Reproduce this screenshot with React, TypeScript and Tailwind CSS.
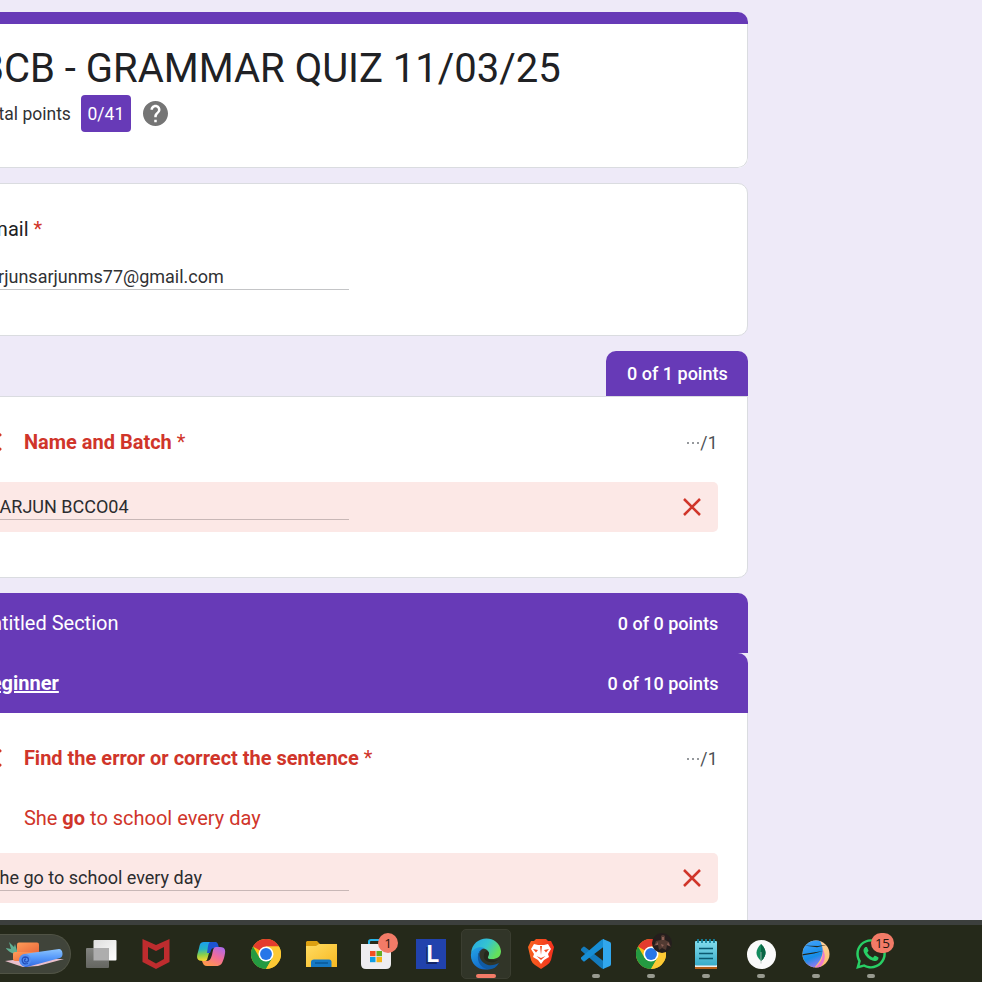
import type { ReactNode } from "react";
import { FaWhatsapp } from "react-icons/fa";

function Cross({ className }: { className: string }) {
  return (
    <svg viewBox="0 0 18 18" className={className} fill="none" stroke="#d0352a" strokeWidth="2.5">
      <path d="M1 1 17 17M17 1 1 17" />
    </svg>
  );
}

function Answer({ children }: { children: string }) {
  return (
    <div className="flex h-[50px] justify-between rounded-[5px] bg-[#fce8e6] pr-[17px] pl-[10.5px]">
      <div className="mt-[7px] h-[31px] w-[360px] border-b border-[#c8b7b6] text-[18px] leading-[36px] whitespace-nowrap text-[#2b2c2f]">
        {children}
      </div>
      <Cross className="mt-[16px] h-[18px] w-[18px]" />
    </div>
  );
}

function QuestionTitle({ children }: { children: string }) {
  return (
    <div className="flex h-[30px] items-center">
      <Cross className="mr-[21.5px] ml-[6px] h-[18px] w-[18px]" />
      <h2 className="grow text-[20px] leading-[30px] font-bold text-[#d0352a]">
        {children} <span className="font-normal">*</span>
      </h2>
      <span className="flex items-center pt-[1px] text-[17.5px] leading-[30px] tracking-[0.3px] text-[#4c4f54]">
        <span className="mr-px flex gap-[3px]">
          <i className="h-[2px] w-[2px] bg-[#96999d]" />
          <i className="h-[2px] w-[2px] bg-[#96999d]" />
          <i className="h-[2px] w-[2px] bg-[#96999d]" />
        </span>
        /1
      </span>
    </div>
  );
}

function SectionBar({ title, points }: { title: ReactNode; points: string }) {
  return (
    <div className="flex h-[60px] items-center justify-between rounded-t-[10px] bg-[#673ab7] px-[30px] text-white">
      <span className="text-[20px]">{title}</span>
      <span className="pt-[1px] text-[18px] font-medium">{points}</span>
    </div>
  );
}

function Chrome() {
  return (
    <svg viewBox="0 0 48 48" className="h-[30px] w-[30px]">
      <circle cx="24" cy="24" r="24" fill="#fbc116" />
      <path d="M24 24 3.2 12A24 24 0 0 1 44.8 12H24Z" fill="#e33b2e" />
      <path d="M3.2 12A24 24 0 0 0 24 48L34.4 30 24 34 13.6 30Z" fill="#249a41" />
      <path d="M24 12H44.8A24 24 0 0 1 24 48L34.4 30Z" fill="#fcc934" />
      <circle cx="24" cy="24" r="12" fill="#fff" />
      <circle cx="24" cy="24" r="9.5" fill="#2676e8" />
    </svg>
  );
}

function YogaPicture() {
  return (
    <svg viewBox="0 0 60 30" className="h-[30px] w-[60px]">
      <defs>
        <linearGradient id="mat" x2="0" y2="1">
          <stop stopColor="#8bc4ff" />
          <stop offset=".5" stopColor="#5598fa" />
          <stop offset="1" stopColor="#3468df" />
        </linearGradient>
        <linearGradient id="block" x2="1" y2="1">
          <stop stopColor="#ff9b58" />
          <stop offset="1" stopColor="#e9673a" />
        </linearGradient>
      </defs>
      <path d="m0 22 16-2 43 0-26 7-15 1Z" fill="#eac0cc" />
      <path d="M10 15C5 14 1 10 1 9l5 1-2-7 5 5 1-3 3 10-3 2Z" fill="#61ae91" />
      <rect x="12" y="3.5" width="22" height="11" rx="2" fill="url(#block)" />
      <rect x="8" y="13" width="26" height="9" rx="2" fill="url(#block)" />
      <path d="M19 15 54 10c4 0 5 8 1 9l-33 9c-9 0-9-11-3-13Z" fill="url(#mat)" />
      <ellipse cx="20" cy="21" rx="6" ry="6" fill="#558ff1" />
      <path d="M23 24.5c-6 2-8-6-3-6.5 5 0 4 5.5 1 5-2 0-2-3 0-3" fill="none" stroke="#2550bb" strokeWidth="1.3" />
    </svg>
  );
}

function TaskView() {
  return (
    <svg viewBox="0 0 32 32" className="h-[32px] w-[32px]">
      <defs>
        <linearGradient id="tv" x2="1" y2="1"><stop stopColor="#dededd" /><stop offset="1" stopColor="#fff" /></linearGradient>
        <linearGradient id="tvBack" x2="0" y2="1"><stop stopColor="#82837f" /><stop offset="1" stopColor="#656661" /></linearGradient>
      </defs>
      <rect x="8.5" y="2" width="23" height="20.5" rx="1" fill="url(#tv)" />
      <rect x="1" y="10" width="23" height="20" rx="1" fill="url(#tvBack)" />
      <path d="M8.5 10H24v12.5H8.5Z" fill="#adadad" />
    </svg>
  );
}

function McAfee() {
  return (
    <svg viewBox="0 0 28 30" className="h-[30px] w-[28px]">
      <path d="m.5 0 13.5 6L27.5 0v23l-13.5 7L.5 23Zm5.500 8v12l8 4.500 8-4.500V8l-8 4Z" fill="#be2c2e" fillRule="evenodd" />
    </svg>
  );
}

function Copilot() {
  return (
    <svg viewBox="0 0 30 28" className="h-[28px] w-[30px]">
      <defs>
        <linearGradient id="cpA" x2=".1" y2="1"><stop stopColor="#1b9cf2" /><stop offset=".4" stopColor="#25b4c3" /><stop offset=".7" stopColor="#8ed046" /><stop offset="1" stopColor="#f7d532" /></linearGradient>
        <linearGradient id="cpB" x1=".9" x2=".3" y2="1"><stop stopColor="#a96af0" /><stop offset=".5" stopColor="#f26c9a" /><stop offset="1" stopColor="#ff984d" /></linearGradient>
      </defs>
      <path d="M8 2h13l-5 3c-2 3-3 9-5 15-.5 1-2 1-4 1-6 0-7-3-5-9S3 2 8 2Z" fill="url(#cpA)" />
      <path d="M14 2h4c4 0 4 2 5 6h-5c-3 0-3 3-4 5h-3c1-5 1-10 3-11Z" fill="#1c54d2" />
      <path d="M20 7h4c6 0 6 4 4 11-2 6-3 8-8 8h-9c-3 0-4-2-5-5h5c3 0 4-3 5-6 1-4 1-8 4-8Z" fill="url(#cpB)" />
    </svg>
  );
}

function Folder() {
  return (
    <svg viewBox="0 0 31 28" className="h-[28px] w-[31px]">
      <defs><linearGradient id="folder" x2="1" y2="1"><stop stopColor="#ffdc62" /><stop offset="1" stopColor="#f7b821" /></linearGradient></defs>
      <path d="M0 2 1 1h10l3 3H30v10H0Z" fill="#dca012" />
      <path d="M0 6h10l3-2h18v23H0Z" fill="url(#folder)" />
      <path d="M5 27v-5q0-2.500 3-2.500h15q2.500 0 2.500 2.500v5Z" fill="#1679c4" />
      <path d="M9 23h13" stroke="#07518d" strokeWidth="1.2" />
    </svg>
  );
}

function Store() {
  return (
    <svg viewBox="0 0 30 30" className="h-[30px] w-[30px]">
      <path d="M8 5V2.500q0-1.500 2-1.500h12" stroke="#28b4e9" strokeWidth="2" fill="none" />
      <path d="M0 5h30v20q0 5-5 5H5q-5 0-5-5Z" fill="#eeedf0" />
      <path d="M9 12h5.500v5.200H9Z" fill="#f25022" /><path d="M15.500 12H21v5.200h-5.500Z" fill="#63ad22" />
      <path d="M9 18h5.500v5.200H9Z" fill="#109fe5" /><path d="M15.500 18H21v5.200h-5.500Z" fill="#f5b414" />
    </svg>
  );
}

function Edge() {
  return (
    <svg viewBox="0 0 32 32" className="h-[32px] w-[32px]">
      <defs>
        <linearGradient id="edgeTop" x2="1" y2=".45"><stop stopColor="#25a6e8" /><stop offset=".55" stopColor="#35c4d0" /><stop offset="1" stopColor="#65e15a" /></linearGradient>
        <linearGradient id="edgeSide" x2=".6" y2="1"><stop stopColor="#24a5e8" /><stop offset="1" stopColor="#1267c8" /></linearGradient>
      </defs>
      <path d="M1 16C2-4 29-4 31 13c0 6-4 8-9 8-4 0-6-1-4-3 3-6-4-9-9-7-4 0-7 2-8 5Z" fill="url(#edgeTop)" />
      <path d="M1 16c1-5 8-8 13-6-5 2-7 7-5 12 2 6 7 9 11 9C8 34 0 25 1 16Z" fill="url(#edgeSide)" />
      <path d="M14 10c-7 3-5 12 0 15 5 4 11 2 15 0-3 5-7 7-11 6C7 30 4 14 14 10Z" fill="#105ba4" />
      <path d="M17 13c3 1 2 4 1 6-1 3 6 4 10 3-6 5-16 1-14-5 .5-3 1-4 3-4Z" fill="#25291c" />
    </svg>
  );
}

function Brave() {
  return (
    <svg viewBox="0 0 26 30" className="h-[30px] w-[26px]">
      <defs><linearGradient id="brave" x2="1"><stop stopColor="#f8641f" /><stop offset="1" stopColor="#f4301d" /></linearGradient></defs>
      <path d="m6 2 2-2h10l2 2h3l3 6-3 13q-1 3-4 5l-6 4-6-4q-3-2-4-5L0 8l3-6Z" fill="url(#brave)" />
      <path d="m6 5 4 1h6l4-1 3 5-3 5 1 3-5 3-3 4-3-4-5-3 1-3-3-5Z" fill="#fff" />
      <path d="m5 10 5 1-2 2.500Zm16 0-5 1 2 2.500ZM12 7h2l-1 9ZM8.500 17l4.500 2 4.500-2-4.500 4Z" fill="#f54b20" />
    </svg>
  );
}

function VsCode() {
  return (
    <svg viewBox="0 0 32 32" className="h-[32px] w-[32px]">
      <path d="m1 11 2-2q1-1 2 0l19 14.500v7.500Q22 31 20 29L1 12.500Z" fill="#147bbd" />
      <path d="m1 21 2 2q1 1 2 0L24 8.500V1q-2 0-4 2L1 19.500Z" fill="#178ed5" />
      <path d="m23 1 7 3q1 .5 1 2v20q0 1.500-1 2l-7 3Z" fill="#31a7ed" />
    </svg>
  );
}

function Notepad() {
  return (
    <svg viewBox="0 0 24 32" className="h-[32px] w-[24px]">
      <defs><linearGradient id="notes" x2="0" y2="1"><stop stopColor="#83dced" /><stop offset="1" stopColor="#38abc8" /></linearGradient></defs>
      <path d="M1 27h22v4H1Z" fill="#b65f19" /><path d="M1 26.500h22v2.500H1Z" fill="#eee" />
      <rect x="1" y="3" width="22" height="24.5" rx="1" fill="url(#notes)" />
      <path d="M4 1v4m4-4v4m4-4v4m4-4v4m4-4v4" stroke="#16809c" strokeWidth="1.8" />
      <path d="M5 10.500h14M5 15.500h14M5 20.500h14" stroke="#0b5971" strokeWidth="1.5" />
    </svg>
  );
}

function MongoLeaf() {
  return (
    <span className="flex h-[29px] w-[29px] items-center justify-center rounded-full bg-[#fafafa]">
      <svg viewBox="0 0 10 20" className="h-[20px] w-[10px]">
        <path d="M5 0c5 5 7 11 0 17C-2 11 0 5 5 0Z" fill="#138a5d" />
        <path d="M5 0c5 5 7 11 0 17Z" fill="#086544" />
        <path d="M5 8v11.500" stroke="#a9bab1" strokeWidth=".8" />
      </svg>
    </span>
  );
}

function Globe() {
  return (
    <svg viewBox="0 0 30 30" className="h-[30px] w-[30px]">
      <defs>
        <clipPath id="globe"><circle cx="15" cy="15" r="13.5" /></clipPath>
        <linearGradient id="globeWarm" x2="0" y2="1"><stop stopColor="#ffd1a0" /><stop offset="1" stopColor="#fbbd67" /></linearGradient>
        <linearGradient id="globeBlue" x2=".3" y2="1"><stop stopColor="#4ba6ff" /><stop offset=".7" stopColor="#168de8" /><stop offset="1" stopColor="#8b7bf0" /></linearGradient>
      </defs>
      <g clipPath="url(#globe)">
        <path d="M0 0h30v30H0Z" fill="url(#globeWarm)" />
        <path d="M12 30c9-6 11-13 9-21 5 7 3 16-4 21Z" fill="#ee79cf" />
        <path d="M0 0h18c6 10 5 19-6 30H0Z" fill="url(#globeBlue)" />
        <path d="m3 6.500 14 .5 10-1.500-11 2.800ZM0 15.500l22-3.500-9 2.500-12 2Z" fill="#222719" />
      </g>
    </svg>
  );
}

function Badge({ children, className }: { children: string; className: string }) {
  return (
    <span className={`absolute flex items-center justify-center rounded-full bg-[#f27b67] font-["Open_Sans",sans-serif] text-[13.5px] tracking-[-0.4px] text-[#24160f] ${className}`}>
      {children}
    </span>
  );
}

function TaskbarItem({ children, running = false, active = false }: { children: ReactNode; running?: boolean; active?: boolean }) {
  return (
    <div className="flex w-[55px] shrink-0 justify-center">
      <div className={`relative flex h-[50px] w-[50px] items-center justify-center rounded-[5px] ${active ? "border border-[#3b3e31] bg-[#313528]" : ""}`}>
        {children}
        {running && <i className="absolute bottom-[1px] h-[4px] w-[8px] rounded-full bg-[#989a8f]" />}
        {active && <i className="absolute bottom-0 h-[4px] w-[20px] rounded-full bg-[#f27b67]" />}
      </div>
    </div>
  );
}

function Taskbar() {
  return (
    <footer className="flex h-[62px] items-start border-t-[5px] border-[#3c3f3d] bg-[#25291a] pt-[4px]">
      <div className="mt-[5px] mr-[2.5px] flex h-[40px] w-[71.3px] shrink-0 items-center rounded-r-full border border-l-0 border-[#505345] bg-[#40443a] pl-[5px]">
        <YogaPicture />
      </div>
      <TaskbarItem><TaskView /></TaskbarItem>
      <TaskbarItem><McAfee /></TaskbarItem>
      <TaskbarItem><Copilot /></TaskbarItem>
      <TaskbarItem><Chrome /></TaskbarItem>
      <TaskbarItem><Folder /></TaskbarItem>
      <TaskbarItem><Store /><Badge className="top-[4px] left-[26.5px] h-[20px] w-[20px]">1</Badge></TaskbarItem>
      <TaskbarItem>
        <span className="flex h-[30px] w-[30px] items-center justify-center bg-[#2142ad] pl-[3px] text-[23px] leading-none font-bold text-white [text-shadow:-1.5px_1.5px_0_#142567]">L</span>
      </TaskbarItem>
      <TaskbarItem active><Edge /></TaskbarItem>
      <TaskbarItem><Brave /></TaskbarItem>
      <TaskbarItem running><VsCode /></TaskbarItem>
      <TaskbarItem running>
        <Chrome />
        <svg viewBox="0 0 20 20" className="absolute top-[4px] left-[26px] h-[20px] w-[20px]">
          <circle cx="10" cy="10" r="10" fill="#241e1d" />
          <path d="M9 3q2-2 4 0v4l4 2 2 5-4-2-1 5-4-2-3 2-1-5-4 1 2-5 5-1Z" fill="#523a32" />
          <path d="M10 4h2v3h-2ZM3 12l3-3v3Zm13-3 2 4-3-1ZM9 11l3 1-2 2Z" fill="#8d6157" />
        </svg>
      </TaskbarItem>
      <TaskbarItem running><Notepad /></TaskbarItem>
      <TaskbarItem running><MongoLeaf /></TaskbarItem>
      <TaskbarItem running><Globe /></TaskbarItem>
      <TaskbarItem running>
        <FaWhatsapp className="h-[34px] w-[34px] text-[#28cf65]" />
        <Badge className="top-[4px] left-[24.5px] h-[20px] w-[23px]">15</Badge>
      </TaskbarItem>
    </footer>
  );
}

export default function App() {
  return (
    <div className="h-[982px] w-[982px] overflow-hidden bg-[#eeeaf8] font-[Roboto,sans-serif]">
      <div className="h-[920px] overflow-hidden">
        <main className="-ml-[52px] w-[800.4px] pt-[12px]">
          <section className="h-[156px] overflow-hidden rounded-[10px] bg-white">
            <div className="h-[12px] bg-[#673ab7]" />
            <div className="h-[144px] rounded-b-[10px] border border-t-0 border-[#dadce0] px-[30px] pt-[20px]">
              <h1 className="text-[40px] leading-[50px] whitespace-nowrap text-[#202124]">BCB - GRAMMAR QUIZ 11/03/25</h1>
              <div className="mt-[1px] flex items-center text-[17.5px] text-[#303134]">
                <span className="pt-[1px]">Total points</span>
                <span className="ml-[10px] flex h-[37px] w-[50px] items-center justify-center rounded-[4px] bg-[#673ab7] pt-[1px] text-white">0/41</span>
                <svg viewBox="2 2 20 20" className="ml-[12px] h-[25px] w-[25px]" fill="#757575">
                  <path d="M12 2C6.48 2 2 6.48 2 12s4.48 10 10 10 10-4.48 10-10S17.52 2 12 2zm1 17h-2v-2h2v2zm2.07-7.75l-.9.92C13.45 12.9 13 13.5 13 15h-2v-.5c0-1.1.45-2.1 1.17-2.83l1.24-1.26c.37-.36.59-.86.59-1.41 0-1.1-.9-2-2-2s-2 .9-2 2H8c0-2.21 1.79-4 4-4s4 1.79 4 4c0 .88-.36 1.68-.93 2.25z" />
                </svg>
              </div>
            </div>
          </section>

          <section className="mt-[15px] h-[153px] rounded-[10px] border border-[#dadce0] bg-white px-[30px] pt-[30px]">
            <h2 className="text-[20px] leading-[30px] text-[#202124]">Email <span className="text-[#d0352a]">*</span></h2>
            <div className="mt-[15px] h-[31px] w-[370px] border-b border-[#c4c5c7] pl-[9.3px] text-[18px] leading-[36px] text-[#303134]">arjunsarjunms77@gmail.com</div>
          </section>

          <div className="mt-[15px] ml-auto flex h-[45px] w-[142px] items-center justify-center rounded-t-[10px] bg-[#673ab7] text-[18px] font-medium text-white">0 of 1 points</div>
          <section className="h-[182px] rounded-b-[10px] border border-[#dadce0] bg-white px-[29.4px] pt-[30px]">
            <QuestionTitle>Name and Batch</QuestionTitle>
            <div className="mt-[25px]"><Answer>SARJUN BCCO04</Answer></div>
          </section>

          <div className="mt-[15px]">
            <SectionBar title="Untitled Section" points="0 of 0 points" />
            <SectionBar title={<b className="underline">Beginner</b>} points="0 of 10 points" />
          </div>
          <section className="h-[300px] border-x border-[#dadce0] bg-white px-[29.4px] pt-[30px]">
            <QuestionTitle>Find the error or correct the sentence</QuestionTitle>
            <p className="mt-[30px] ml-[45.5px] text-[20px] leading-[30px] text-[#d0352a]">She <b>go</b> to school every day</p>
            <div className="mt-[20px]"><Answer>She go to school every day</Answer></div>
          </section>
        </main>
      </div>
      <Taskbar />
    </div>
  );
}
